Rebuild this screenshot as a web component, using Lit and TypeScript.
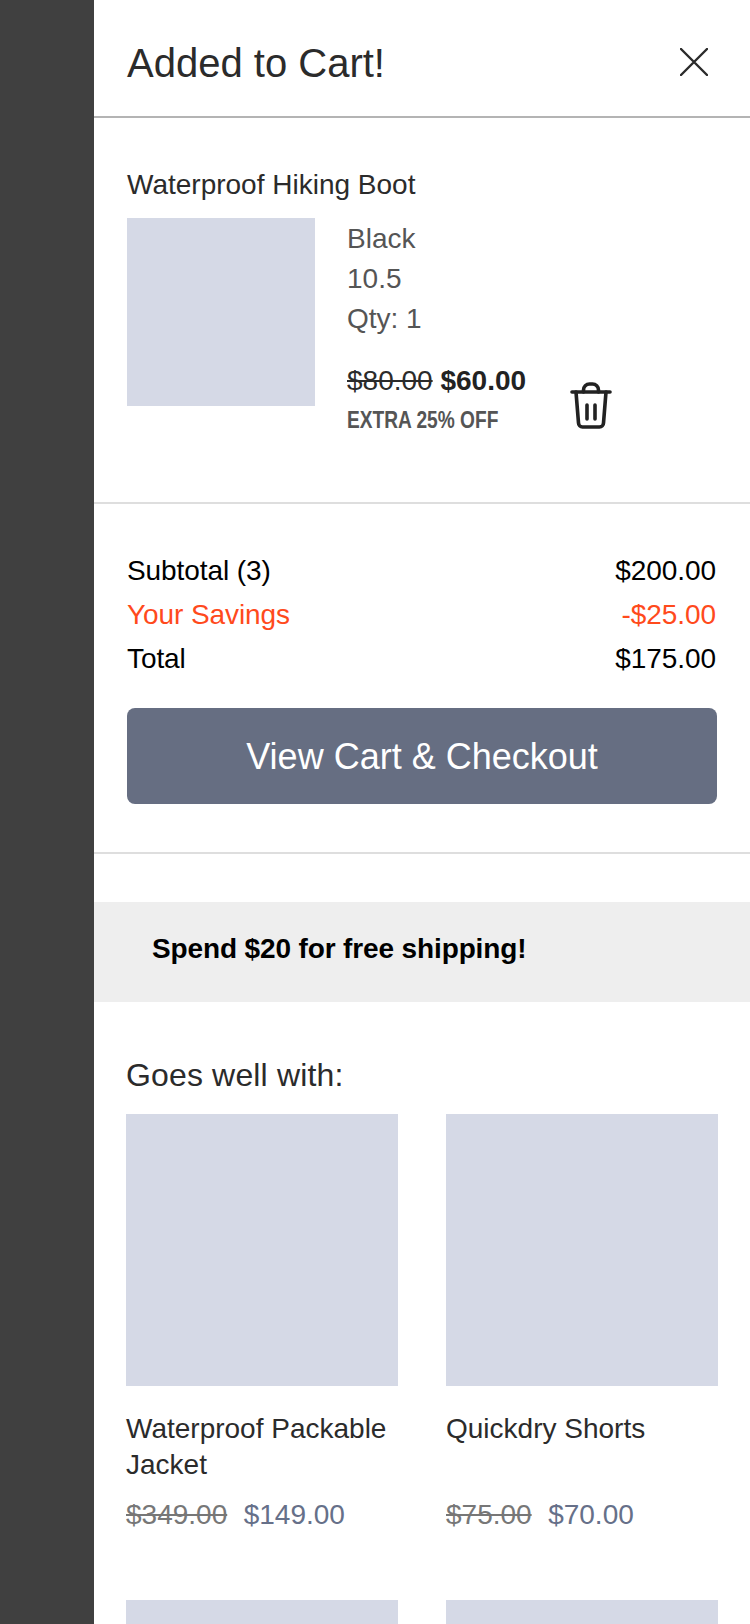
import { LitElement, html, css } from "lit";
import { customElement } from "lit/decorators.js";

@customElement("app-root")
export class AppRoot extends LitElement {
  static styles = css`
    :host {
      display: block;
      width: 750px;
      height: 1624px;
      overflow: hidden;
      background: #404040;
      font-family: "Liberation Sans", Arial, sans-serif;
      color: #2b2b2b;
    }
    .panel {
      margin-left: 94px;
      height: 1624px;
      background: #fff;
      overflow: hidden;
    }
    .header {
      height: 116px;
      border-bottom: 2px solid #b4b4b4;
      display: flex;
      align-items: center;
      justify-content: space-between;
      padding: 0 42px 0 33px;
      box-sizing: content-box;
    }
    .title { font-size: 40px; line-height: 48px; margin-top: 10px; }
    .close { display: block; width: 28px; height: 28px; margin-top: 8px; }
    .item {
      padding: 49px 33px 68px;
      border-bottom: 2px solid #dedede;
    }
    .name { font-size: 28px; line-height: 36px; margin-bottom: 15px; }
    .item-row {
      display: grid;
      grid-template-columns: 188px 255px 42px;
      column-gap: 0;
    }
    .thumb { width: 188px; height: 188px; background: #d5d9e6; }
    .details { padding: 1px 0 0 32px; }
    .opt { font-size: 28px; line-height: 40px; color: #555; }
    .price { font-size: 28px; line-height: 36px; margin-top: 24px; white-space: nowrap; }
    .price s { color: #2b2b2b; }
    .price b { color: #222; }
    .extra {
      font-weight: 700;
      font-size: 23px;
      line-height: 28px;
      margin-top: 7px;
      color: #555;
      white-space: nowrap;
      transform: scaleX(0.832);
      transform-origin: left center;
    }
    .trash { display: block; align-self: end; width: 42px; height: 47px; margin-bottom: 5px; }
    .summary {
      padding: 45px 33px 48px;
      border-bottom: 2px solid #dedede;
    }
    .line {
      display: flex;
      justify-content: space-between;
      font-size: 28px;
      line-height: 44px;
      color: #000;
      letter-spacing: -0.08px;
      padding-right: 1px;
    }
    .line.save { color: #ff4a1c; }
    .btn {
      margin-top: 27px;
      height: 94px;
      padding-top: 2px;
      border-radius: 8px;
      background: #666e82;
      color: #fff;
      font-size: 36px;
      display: flex;
      align-items: center;
      justify-content: center;
    }
    .banner {
      margin-top: 48px;
      height: 94px;
      padding: 0 0 6px 58px;
      background: #eeeeee;
      display: flex;
      align-items: center;
      font-size: 28px;
      font-weight: 700;
      letter-spacing: -0.13px;
      color: #000;
    }
    .goes {
      font-size: 32px;
      line-height: 40px;
      letter-spacing: 0.15px;
      margin: 53px 0 19px 32px;
    }
    .grid {
      display: grid;
      grid-template-columns: 272px 272px;
      column-gap: 48px;
      row-gap: 67px;
      padding-left: 32px;
    }
    .pic { width: 272px; height: 272px; background: #d5d9e6; }
    .card-title {
      font-size: 28px;
      line-height: 36px;
      min-height: 72px;
      margin-top: 25px;
    }
    .card-price {
      display: flex;
      gap: 16.5px;
      font-size: 28px;
      line-height: 36px;
      margin-top: 14px;
      color: #667089;
    }
    .card-price s { color: #777; }
  `;

  private products = [
    { name: "Waterproof Packable Jacket", was: "$349.00", now: "$149.00" },
    { name: "Quickdry Shorts", was: "$75.00", now: "$70.00" },
    { name: "", was: "", now: "" },
    { name: "", was: "", now: "" },
  ];

  render() {
    return html`
      <div class="panel">
        <div class="header">
          <div class="title">Added to Cart!</div>
          <svg class="close" viewBox="0 0 28 28" fill="none" stroke="#2b2b2b" stroke-width="2.4" stroke-linecap="round">
            <path d="M1 1L27 27M27 1L1 27"></path>
          </svg>
        </div>
        <div class="item">
          <div class="name">Waterproof Hiking Boot</div>
          <div class="item-row">
            <div class="thumb"></div>
            <div class="details">
              <div class="opt">Black</div>
              <div class="opt">10.5</div>
              <div class="opt">Qty: 1</div>
              <div class="price"><s>$80.00</s> <b>$60.00</b></div>
              <div class="extra">EXTRA 25% OFF</div>
            </div>
            <svg class="trash" viewBox="0 0 42 47" fill="none" stroke="#222" stroke-width="3.6" stroke-linecap="round" stroke-linejoin="round">
              <path d="M2 10H40"></path>
              <path d="M13.5 10V8a6 6 0 0 1 6-6h3a6 6 0 0 1 6 6v2"></path>
              <path d="M6 10L8.5 41a4 4 0 0 0 4 4h17a4 4 0 0 0 4-4L36 10"></path>
              <path d="M17 23V37M25 23V37"></path>
            </svg>
          </div>
        </div>
        <div class="summary">
          <div class="line"><span>Subtotal (3)</span><span>$200.00</span></div>
          <div class="line save"><span>Your Savings</span><span>-$25.00</span></div>
          <div class="line"><span>Total</span><span>$175.00</span></div>
          <div class="btn">View Cart &amp; Checkout</div>
        </div>
        <div class="banner">Spend $20 for free shipping!</div>
        <div class="goes">Goes well with:</div>
        <div class="grid">
          ${this.products.map(
            (p) => html`
              <div>
                <div class="pic"></div>
                ${p.name
                  ? html`<div class="card-title">${p.name}</div>
                      <div class="card-price"><s>${p.was}</s><span>${p.now}</span></div>`
                  : ""}
              </div>
            `
          )}
        </div>
      </div>
    `;
  }
}
